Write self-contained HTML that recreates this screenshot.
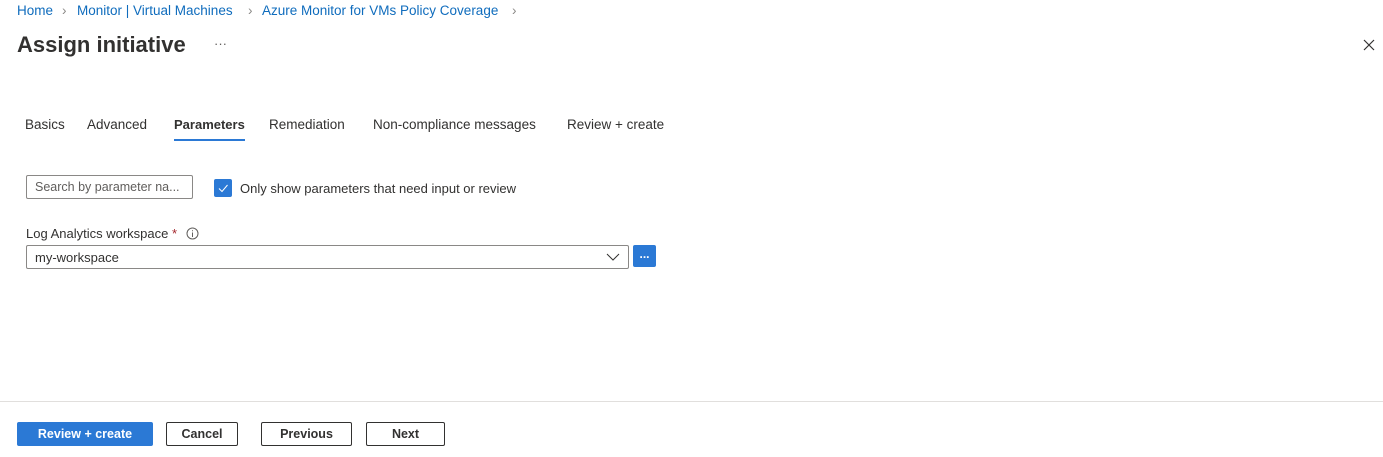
<!DOCTYPE html>
<html><head><style>
body{margin:0;width:1383px;height:457px;background:#fff;font-family:"Liberation Sans",sans-serif;font-size:13px;color:#323130;position:relative;overflow:hidden}
.a{position:absolute;white-space:nowrap}
.bc{color:#0f6cbd;font-size:13.5px;top:3px}
.sep{color:#8a8886;top:3px;font-size:13.5px}
.tab{top:117px;font-size:13.5px;color:#323130}
.btn{position:absolute;top:422px;height:22px;border:1px solid #323130;border-radius:2px;font-weight:bold;font-size:12.5px;text-align:center;line-height:22px;box-sizing:content-box}
</style></head><body>
<div class="a bc" style="left:17px">Home</div>
<div class="a sep" style="left:62px">›</div>
<div class="a bc" style="left:77px">Monitor | Virtual Machines</div>
<div class="a sep" style="left:248px">›</div>
<div class="a bc" style="left:262px">Azure Monitor for VMs Policy Coverage</div>
<div class="a sep" style="left:512px">›</div>
<div class="a" style="left:17px;top:32px;font-size:22px;font-weight:bold;color:#323130">Assign initiative</div>
<div class="a" style="left:214px;top:36px;font-size:13px;color:#605e5c">···</div>
<svg class="a" style="left:1363px;top:39px" width="12" height="12"><path d="M1 1L11 11M11 1L1 11" stroke="#323130" stroke-width="1.2"/></svg>
<div class="a tab" style="left:25px">Basics</div>
<div class="a tab" style="left:87px">Advanced</div>
<div class="a tab" style="left:174px;font-weight:bold;font-size:13px">Parameters</div>
<div class="a" style="left:174px;top:139px;width:71px;height:2px;background:#2b79d5"></div>
<div class="a tab" style="left:269px">Remediation</div>
<div class="a tab" style="left:373px">Non-compliance messages</div>
<div class="a tab" style="left:567px">Review + create</div>
<div class="a" style="left:26px;top:175px;border:1px solid #8a8886;border-radius:2px;color:#605e5c;font-size:12.5px;line-height:22px;padding-left:8px;box-sizing:border-box;width:167px;height:24px">Search by parameter na...</div>
<div class="a" style="left:214px;top:179px;width:18px;height:18px;background:#2b79d5;border-radius:2px"><svg width="18" height="18"><path d="M5 9.5L8 12.5L13.5 6" stroke="#fff" stroke-width="1" fill="none"/></svg></div>
<div class="a" style="left:240px;top:181px;font-size:13px">Only show parameters that need input or review</div>
<div class="a" style="left:26px;top:226px;font-size:13px">Log Analytics workspace <span style="color:#a4262c">*</span></div>
<svg class="a" style="left:186px;top:227px" width="13" height="13"><circle cx="6.5" cy="6.5" r="5.5" stroke="#605e5c" fill="none"/><path d="M6.5 5.5V10M6.5 3.3V4.3" stroke="#605e5c"/></svg>
<div class="a" style="left:26px;top:245px;width:603px;height:24px;border:1px solid #8a8886;border-radius:2px;box-sizing:border-box;line-height:23px;padding-left:8px;font-size:13px">my-workspace</div>
<svg class="a" style="left:606px;top:252px" width="14" height="10"><path d="M1 2L7 8L13 2" stroke="#323130" fill="none"/></svg>
<div class="a" style="left:633px;top:245px;width:23px;height:22px;background:#2b79d5;border-radius:2px;color:#fff;font-weight:bold;text-align:center;line-height:18px;font-size:12px">...</div>
<div class="a" style="left:0;top:401px;width:1383px;height:1px;background:#e1dfdd"></div>
<div class="btn" style="left:17px;width:134px;background:#2b79d5;border-color:#2b79d5;color:#fff">Review + create</div>
<div class="btn" style="left:166px;width:70px">Cancel</div>
<div class="btn" style="left:261px;width:89px">Previous</div>
<div class="btn" style="left:366px;width:77px">Next</div>
</body></html>
